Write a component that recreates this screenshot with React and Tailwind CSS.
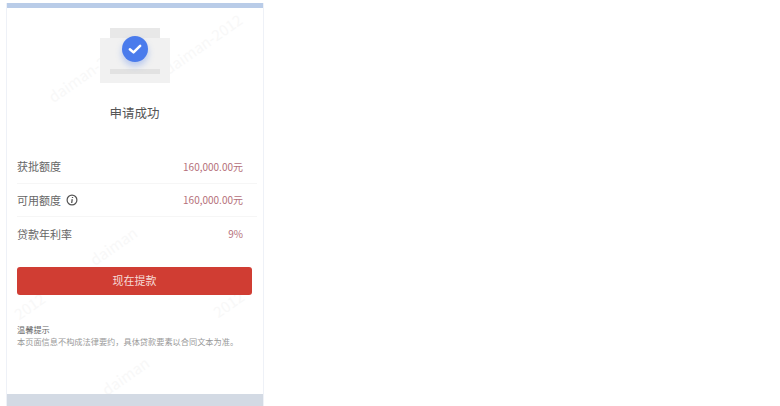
import React from 'react';

const font = { fontFamily: '"Noto Sans CJK SC", "Liberation Sans", sans-serif' };

const rows = [
  { label: '获批额度', value: '160,000.00元' },
  { label: '可用额度', value: '160,000.00元', info: true },
  { label: '贷款年利率', value: '9%' },
];

const marks = [
  { text: 'daiman-2012', cls: 'left-[35px] top-[58px]' },
  { text: 'daiman-2012', cls: 'left-[150px] top-[30px]' },
  { text: 'daiman', cls: 'left-[80px] top-[232px]' },
  { text: '2012', cls: 'left-[6px] top-[292px]' },
  { text: '2012', cls: 'left-[205px] top-[290px]' },
  { text: 'daiman', cls: 'left-[92px] top-[362px]' },
];

const Illustration = () => (
  <div className="relative w-[70px] h-[55px]">
    <div className="absolute left-[10px] top-0 w-[50px] h-[20px] bg-[#e8e8e8]" />
    <div className="absolute left-0 top-[10px] w-[70px] h-[45px] bg-[#f1f1f1]" />
    <div className="absolute left-[10px] top-[41px] w-[50px] h-[5px] bg-[#e2e2e2]" />
    <div className="absolute left-[22px] top-[8px] w-[26px] h-[26px] rounded-full bg-[#4a7bec] shadow-[0_4px_6px_rgba(74,123,236,0.35)] flex items-center justify-center">
      <svg width="16" height="16" viewBox="0 0 14 14" fill="none">
        <path d="M2.5 7.2 L5.7 10 L11.5 4.2" stroke="#fff" strokeWidth="2.2" strokeLinecap="round" strokeLinejoin="round" />
      </svg>
    </div>
  </div>
);

const App = () => {
  return (
    <div className="w-[780px] h-[406px] bg-white overflow-hidden pt-[3px]" style={font}>
      <div className="relative w-[258px] h-[403px] ml-[6px] flex flex-col border-x border-[#eef1f7] overflow-hidden">
        <div className="h-[5px] shrink-0 bg-[#b9cce8]" />

        {marks.map((m, i) => (
          <span key={i} className={`absolute ${m.cls} -rotate-[35deg] text-[15px] text-[#f8f8f8] whitespace-nowrap`}>
            {m.text}
          </span>
        ))}

        <div className="relative flex-1 flex flex-col pl-[10px] pr-[11px]">
          <div className="flex flex-col items-center pt-[20px]">
            <Illustration />
            <div className="mt-[21px] text-[12.5px] leading-[18px] text-[#555]">申请成功</div>
          </div>

          <div className="mt-[28px] -mr-[5px]">
            {rows.map((row, i) => (
              <div
                key={row.label}
                className={`h-[33.5px] flex items-center justify-between pr-[14px] ${i < rows.length - 1 ? 'border-b border-[#f6f6f6]' : ''}`}
              >
                <div className="flex items-center gap-[5px] text-[11px] text-[#666]">
                  <span>{row.label}</span>
                  {row.info && (
                    <svg width="12" height="12" viewBox="0 0 12 12" fill="none">
                      <circle cx="6" cy="6" r="4.9" stroke="#555" strokeWidth="1.2" />
                      <path d="M6.5 3 L6.5 3.9 M6.2 5.1 L5.7 9" stroke="#555" strokeWidth="1.3" />
                    </svg>
                  )}
                </div>
                <span className="text-[10px] text-[#b5707a]">{row.value}</span>
              </div>
            ))}
          </div>

          <button className="mt-[16px] h-[28px] w-full rounded-[3px] bg-[#d03d33] text-[11px] text-[#f6dcd8]">
            现在提款
          </button>

          <div className="mt-[28px] text-[8.2px] leading-[12px]">
            <div className="text-[#666]">温馨提示</div>
            <div className="text-[#999] whitespace-nowrap">本页面信息不构成法律要约，具体贷款要素以合同文本为准。</div>
          </div>
        </div>

        <div className="relative h-[12px] shrink-0 bg-[#d3dae4]" />
      </div>
    </div>
  );
};

export default App;
